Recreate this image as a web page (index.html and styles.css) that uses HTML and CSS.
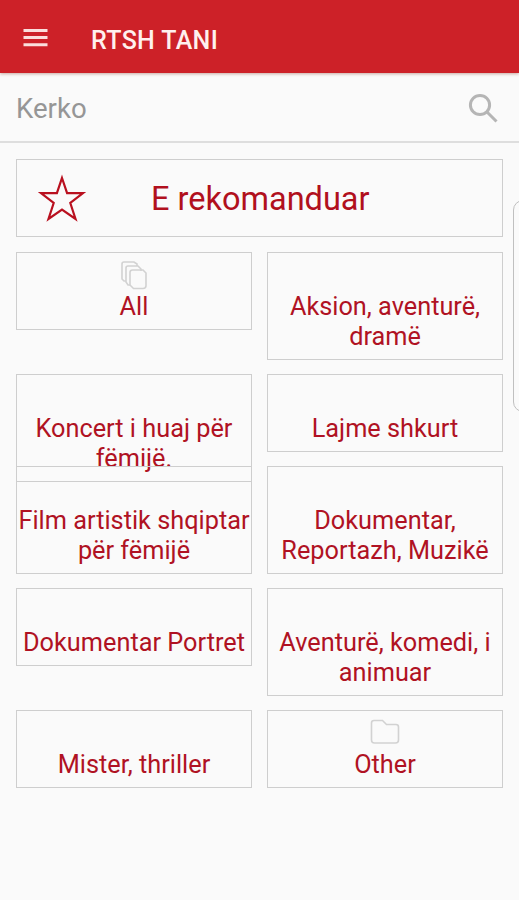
FILE: index.html
```html
<!DOCTYPE html>
<html lang="sq">
<head>
<meta charset="utf-8">
<title>RTSH TANI</title>
<link rel="stylesheet" href="styles.css">
</head>
<body>
<header class="app-bar">
  <svg class="menu" width="26" height="20" viewBox="0 0 26 20"><path d="M.5 2.500h24M.5 9.600h24M.5 16.700h24"/></svg>
  <h1>RTSH TANI</h1>
</header>
<div class="search">
  <span>Kerko</span>
  <svg class="lens" width="32" height="32" viewBox="0 0 32 32"><circle cx="12" cy="12" r="9.600"/><path d="M19 19l9.500 9.500"/></svg>
</div>
<main>
  <section class="featured">
    <svg class="star" width="50" height="50" viewBox="0 0 50 50"><path d="M25 4L30.100 19.100H46L33.300 29L38.500 45L25 35.500L11.500 45L16.700 29L4 19.100H19.900Z"/></svg>
    <span>E rekomanduar</span>
  </section>
  <section class="grid">
    <article class="card">
      <svg class="icon" width="30" height="32" viewBox="0 0 30 32"><path d="M7 22H5L3 20V5Q3 3 5 3H15L18 5V7M11 26H9L7 23V9Q7 7 9 7H19L22 10V12"/><path d="M13.500 11H24L27 14V26.500Q27 29.500 24 29.500H14.500L11 26V13.500Q11 11 13.500 11Z"/></svg>
      <span>All</span>
    </article>
    <article class="card tall"><span>Aksion, aventurë,<br>dramë</span></article>
    <article class="card tall"><span>Koncert i huaj për<br>fëmijë.</span></article>
    <article class="card"><span>Lajme shkurt</span></article>
    <article class="card tall"><span>Film artistik shqiptar<br>për fëmijë</span></article>
    <article class="card tall"><span>Dokumentar,<br>Reportazh, Muzikë</span></article>
    <article class="card"><span>Dokumentar Portret</span></article>
    <article class="card tall"><span>Aventurë, komedi, i<br>animuar</span></article>
    <article class="card"><span>Mister, thriller</span></article>
    <article class="card">
      <svg class="icon" width="30" height="32" viewBox="0 0 30 32"><path d="M4 3.500H12.500L16.500 7.500H26Q28.500 7.500 28.500 10V23Q28.500 26 25.500 26H4.500Q1.500 26 1.500 23V6Q1.500 3.500 4 3.500Z"/></svg>
      <span>Other</span>
    </article>
  </section>
</main>
<aside class="edge-handle"></aside>
</body>
</html>
```
FILE: styles.css
```css
* { box-sizing: border-box; }
body {
  margin: 0;
  height: 900px;
  overflow: hidden;
  background: #fafafa;
  font-family: Roboto, "Liberation Sans", sans-serif;
}
svg { fill: none; flex: none; }
.app-bar {
  height: 73px;
  padding: 5px 0 0 23px;
  display: flex;
  align-items: center;
  gap: 42px;
  background: #cd2128;
  box-shadow: 0 1px 3px #c9a9a0;
}
.menu { margin-bottom: 2px; stroke: #fbdedc; stroke-width: 3; }
h1 {
  margin: 2px 0 0;
  color: #fff0ee;
  font-size: 25px;
  font-weight: 500;
  letter-spacing: 0.35px;
}
.search {
  height: 70px;
  padding: 3px 19px 0 16px;
  display: flex;
  align-items: center;
  justify-content: space-between;
  border-bottom: 2px solid #dedede;
  color: #969696;
  font-size: 27.6px;
}
.lens { stroke: #b5b5b5; stroke-width: 3; }
main { padding: 16px 16px 0; }
.featured {
  height: 78px;
  padding: 2px 0 0 20px;
  display: flex;
  align-items: center;
  border: 1.5px solid #cecece;
  color: #b1101d;
  font-size: 32.5px;
}
.featured span { margin-left: 64px; white-space: nowrap; }
.star { stroke: #b9101f; stroke-width: 2.2; }
.grid {
  margin-top: 15px;
  display: grid;
  grid-template-columns: 236px 236px;
  grid-template-rows: 107px 77px 107px 107px 77px;
  gap: 15px;
  align-items: start;
}
.card {
  height: 78px;
  display: flex;
  flex-direction: column;
  align-items: center;
  padding-top: 39px;
  border: 1.5px solid #cecece;
  color: #b01223;
  font-size: 25.3px;
  line-height: 30px;
  text-align: center;
  white-space: nowrap;
}
.tall { height: 108px; }
.icon {
  margin: -33px 0 1px;
  stroke: #d2d2d2;
  stroke-width: 1.6;
}
.edge-handle {
  position: absolute;
  top: 200px;
  left: 513px;
  width: 20px;
  height: 212px;
  border: 1px solid #c0c0c0;
  border-radius: 10px;
}
```
